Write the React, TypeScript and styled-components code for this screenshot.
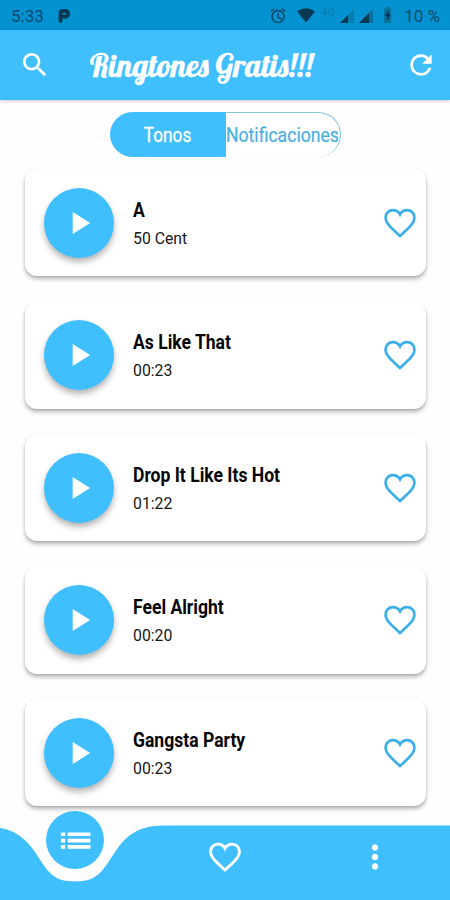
import React from "react";
import styled, { createGlobalStyle } from "styled-components";

const Global = createGlobalStyle`
  * { box-sizing: border-box; }
  body { margin: 0; background: #fefefe; font-family: Roboto, "Liberation Sans", sans-serif; }
  button { border: 0; padding: 0; background: none; font: inherit; color: inherit; display: grid; place-items: center; }
  svg { display: block; }
`;

const BLUE = "#40bfff";

const Screen = styled.div`
  width: 450px;
  height: 900px;
  overflow: hidden;
  display: flex;
  flex-direction: column;
`;

const StatusBar = styled.div`
  height: 30px;
  flex: none;
  background: #0492d1;
  color: #06496b;
  display: flex;
  align-items: center;
  justify-content: space-between;
  padding: 1px 10px 0 11px;
  font-size: 17px;
`;

const StatusGroup = styled.div<{ $gap: number }>`
  display: flex;
  align-items: center;
  gap: ${(p) => p.$gap}px;
`;

const AppBar = styled.header`
  height: 70px;
  flex: none;
  background: ${BLUE};
  color: #fff;
  display: flex;
  align-items: center;
  padding: 0 13px 0 19px;
  box-shadow: 0 1px 4px rgba(0, 0, 0, 0.22);
`;

const Title = styled.h1`
  flex: 1;
  margin: 0 0 0 39px;
  font: 400 32px/40px "Lobster", "Liberation Serif", serif;
  white-space: nowrap;
  -webkit-text-stroke: 0.4px #fff;
`;

const Narrow = styled.span<{ $scale: number; $origin?: string }>`
  display: inline-block;
  white-space: nowrap;
  transform: scaleX(${(p) => p.$scale});
  transform-origin: ${(p) => p.$origin ?? "left"} center;
`;

const Tabs = styled.div`
  width: 231px;
  height: 45px;
  flex: none;
  margin: 12px 0 0 110px;
  display: flex;
`;

const Tab = styled.button<{ $active?: boolean }>`
  && {
    width: 115.5px;
    justify-items: ${(p) => (p.$active ? "center" : "start")};
    padding-left: ${(p) => (p.$active ? 0 : 0.5)}px;
    font-size: 20px;
    color: ${(p) => (p.$active ? "#fff" : "#49afe0")};
    background: ${(p) => (p.$active ? BLUE : "#fff")};
    border: solid ${(p) => (p.$active ? BLUE : "#86c5dc")};
    border-width: ${(p) => (p.$active ? "1px" : "1px 1px 0 0")};
    border-radius: ${(p) => (p.$active ? "23px 0 0 23px" : "0 23px 23px 0")};
    -webkit-text-stroke: ${(p) => (p.$active ? "0.3px" : "0.2px")} currentColor;
  }
`;

const List = styled.main`
  flex: 1;
  min-height: 0;
  padding: 12px 24px 0 25px;
  display: flex;
  flex-direction: column;
  gap: 25.5px;
`;

const Card = styled.article`
  height: 107px;
  flex: none;
  border-radius: 12px;
  background: #fff;
  box-shadow: 0 3px 4px rgba(0, 0, 0, 0.28), 0 1px 2px rgba(0, 0, 0, 0.1);
  display: flex;
  align-items: center;
  padding: 0 7px 0 19px;
`;

const PlayButton = styled.button`
  && {
    width: 70px;
    height: 70px;
    flex: none;
    border-radius: 50%;
    background: ${BLUE};
    box-shadow: 0 4px 6px rgba(0, 0, 0, 0.3);
    color: #fff;
  }
`;

const Info = styled.div`
  flex: 1;
  margin: 2px 0 0 19px;
  display: flex;
  flex-direction: column;
  color: #050505;
`;

const Name = styled.div`
  font-size: 19.5px;
  line-height: 28px;
  font-weight: 700;
`;

const Detail = styled.div`
  font-size: 17px;
  line-height: 26px;
  color: #161616;
`;

const HeartButton = styled.button`
  && { color: #3aafe8; }
`;

const BottomNav = styled.nav`
  position: relative;
  height: 90px;
  flex: none;
  color: #fff;
  display: grid;
  grid-template-columns: repeat(3, 150px);
`;

const NavShape = styled.svg`
  position: absolute;
  inset: 0;
`;

const NavItem = styled.button`
  && { position: relative; height: 60px; margin-top: 17px; }
`;

const ActiveItem = styled.button`
  && {
    position: relative;
    justify-self: center;
    width: 58px;
    height: 58px;
    margin-top: 1px;
    border-radius: 50%;
    background: ${BLUE};
  }
`;

const icons = {
  search:
    "M15.5 14h-.79l-.28-.27C15.41 12.59 16 11.11 16 9.5 16 5.91 13.09 3 9.5 3S3 5.91 3 9.5 5.91 16 9.5 16c1.61 0 3.09-.59 4.23-1.57l.27.28v.79l5 4.99L20.49 19l-4.99-5zm-6 0C7.01 14 5 11.99 5 9.5S7.01 5 9.5 5 14 7.01 14 9.5 11.99 14 9.5 14z",
  refresh:
    "M17.65 6.35C16.2 4.9 14.21 4 12 4c-4.42 0-7.99 3.58-7.99 8s3.57 8 7.99 8c3.73 0 6.84-2.55 7.73-6h-2.08c-.82 2.33-3.04 4-5.65 4-3.31 0-6-2.69-6-6s2.69-6 6-6c1.66 0 3.14.69 4.22 1.78L13 11h7V4l-2.35 2.35z",
  play: "M8 5v14l11-7z",
  list: "M3 13.2h2.6v-2.3H3zm0 3.9h2.6v-2.3H3zm0-7.8h2.6V7H3zm4.2 3.9h14v-2.3h-14zm0 3.9h14v-2.3h-14zM7.2 7v2.3h14V7z",
  more: "M12 8c1.1 0 2-.9 2-2s-.9-2-2-2-2 .9-2 2 .9 2 2 2zm0 2c-1.1 0-2 .9-2 2s.9 2 2 2 2-.9 2-2-.9-2-2-2zm0 6c-1.1 0-2 .9-2 2s.9 2 2 2 2-.9 2-2-.9-2-2-2z",
};

const Icon = ({ name, size }: { name: keyof typeof icons; size: number }) => (
  <svg width={size} height={size} viewBox="0 0 24 24" fill="currentColor">
    <path d={icons[name]} />
  </svg>
);

const Heart = ({ weight }: { weight: number }) => (
  <svg width="38" height="38" viewBox="0 0 24 24" fill="none" stroke="currentColor" strokeWidth={weight}>
    <path d="M12 20.2C6.300 15.100 2.900 12.100 2.900 8.500 2.900 5.900 4.900 3.900 7.500 3.900 9.300 3.900 11.100 4.900 12 6.600 12.900 4.900 14.700 3.900 16.500 3.900 19.100 3.900 21.100 5.900 21.100 8.500 21.100 12.100 17.700 15.100 12 20.200z" />
  </svg>
);

const StatusIcons = () => (
  <svg width="126" height="22" viewBox="270 5 126 22" fill="none" stroke="currentColor">
    <circle cx="278" cy="16.5" r="6" strokeWidth="1.7" />
    <path d="M278 13v4l3 2M270.8 11.5l3.6-3M285.2 11.5l-3.6-3" strokeWidth="1.6" />
    <path d="M297 11.5Q306 5 315 11.5L306 22.5z" fill="#053954" stroke="none" />
    <path d="M354 9v14h-14z" fill="#087bad" stroke="none" />
    <path d="M348 15v8h-8z" fill="#053954" stroke="none" />
    <path d="M373 9v14h-14z" fill="#0870a0" stroke="none" />
    <path d="M369 13v10h-10z" fill="#053954" stroke="none" />
    <path d="M384 8.5h2V7h3v1.5h2V23h-7z" fill="#087099" stroke="none" />
    <path d="M388.5 10l-3.500 6h2.200v4.500l3.500-6h-2.200z" fill="#053954" stroke="none" />
  </svg>
);

const StatusIconWrap = styled.div`
  display: grid;
  align-items: center;
  & > * { grid-area: 1 / 1; }
`;

const NetworkLabel = styled.span`
  margin: -6px 0 0 51px;
  font-size: 11px;
  color: #087cac;
`;

const songs = [
  { name: "A", detail: "50 Cent" },
  { name: "As Like That", detail: "00:23" },
  { name: "Drop It Like Its Hot", detail: "01:22" },
  { name: "Feel Alright", detail: "00:20" },
  { name: "Gangsta Party", detail: "00:23" },
];

export default function App() {
  return (
    <Screen>
      <Global />
      <StatusBar>
        <StatusGroup $gap={13}>
          <span>5:33</span>
          <svg width="14" height="16" viewBox="0 0 14 16">
            <path d="M3.5 13V5.500Q3.500 3 6.500 3H8Q11 3 11 5.800T8 8.600H6" fill="none" stroke="#053954" strokeWidth="3.9" strokeLinecap="round" />
          </svg>
        </StatusGroup>
        <StatusGroup $gap={8}>
          <StatusIconWrap>
            <StatusIcons />
            <NetworkLabel>4G</NetworkLabel>
          </StatusIconWrap>
          <span>10 %</span>
        </StatusGroup>
      </StatusBar>
      <AppBar>
        <button aria-label="Buscar"><Icon name="search" size={32} /></button>
        <Title><Narrow $scale={0.978}>Ringtones Gratis!!!</Narrow></Title>
        <button aria-label="Actualizar"><Icon name="refresh" size={32} /></button>
      </AppBar>
      <Tabs>
        <Tab $active><Narrow $scale={0.86} $origin="center">Tonos</Narrow></Tab>
        <Tab><Narrow $scale={0.88}>Notificaciones</Narrow></Tab>
      </Tabs>
      <List>
        {songs.map((song) => (
          <Card key={song.name}>
            <PlayButton aria-label="Reproducir"><Icon name="play" size={38} /></PlayButton>
            <Info>
              <Name><Narrow $scale={0.9}>{song.name}</Narrow></Name>
              <Detail><Narrow $scale={0.93}>{song.detail}</Narrow></Detail>
            </Info>
            <HeartButton aria-label="Favorito"><Heart weight={1.7} /></HeartButton>
          </Card>
        ))}
      </List>
      <BottomNav>
        <NavShape width="450" height="90" viewBox="0 0 450 90">
          <path d="M0 18C15 20 26 29 35 42C45 56.500 51 71.200 71 71.200H79C99 71.200 105 56.500 115 42C125 26.500 138 15.500 163 15.500H450V90H0Z" fill={BLUE} />
        </NavShape>
        <ActiveItem aria-label="Lista"><Icon name="list" size={39} /></ActiveItem>
        <NavItem aria-label="Favoritos"><Heart weight={1.8} /></NavItem>
        <NavItem aria-label="Más"><Icon name="more" size={38} /></NavItem>
      </BottomNav>
    </Screen>
  );
}
